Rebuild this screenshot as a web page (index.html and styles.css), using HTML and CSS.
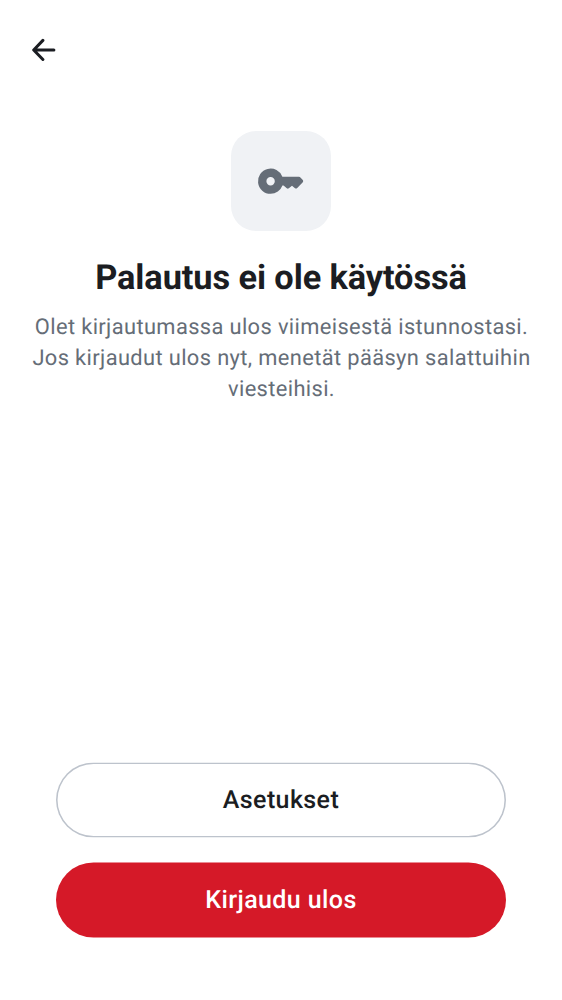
FILE: index.html
```html
<!DOCTYPE html>
<html lang="fi">
<head>
<meta charset="utf-8">
<title>Palautus ei ole käytössä</title>
<link rel="stylesheet" href="styles.css">
</head>
<body>
<div class="screen">
  <header class="topbar">
    <button class="back" aria-label="Takaisin">
      <svg width="24" height="24" viewBox="0 0 24 24" fill="none" stroke="#1b1d22" stroke-width="3" stroke-linecap="round" stroke-linejoin="round"><path d="M21.9 12H2M10.9 2.4L1.7 12l9.2 9.5"/></svg>
    </button>
  </header>
  <main class="content">
    <div class="tile">
      <svg width="50" height="50" viewBox="0 0 50 50" fill="#656d77"><path fill-rule="evenodd" d="M14.6 29.4a4.2 4.2 0 1 1 0-8.4 4.2 4.2 0 0 1 0 8.4M14.6 37.8a12.6 12.6 0 1 1 11.8-17H43q.8 0 1.4.6l2.4 2.6q.9 1.1 0 2.2L41 32.2q-1 .8-2 0L36 29.7l-3.2 2.6q-1 .8-2 0L27.5 29.4h-1.1A12.6 12.6 0 0 1 14.6 37.8"/></svg>
    </div>
    <h1 class="title">Palautus ei ole käytössä</h1>
    <p class="subtitle">Olet kirjautumassa ulos viimeisestä istunnostasi. Jos kirjaudut ulos nyt, menetät pääsyn salattuihin viesteihisi.</p>
  </main>
  <footer class="actions">
    <button class="button outlined">Asetukset</button>
    <button class="button danger">Kirjaudu ulos</button>
  </footer>
</div>
</body>
</html>
```
FILE: styles.css
```css
* { box-sizing: border-box; }
body { margin: 0; background: #fff; font-family: Roboto, sans-serif; text-rendering: geometricPrecision; }
button { border: 0; padding: 0; background: none; font: inherit; text-rendering: inherit; }
.screen { height: 1000px; display: flex; flex-direction: column; }
.topbar { height: 100px; display: flex; align-items: center; padding-left: 32px; }
.back { display: flex; }
.content { flex: 1; display: flex; flex-direction: column; align-items: center; padding: 31px 25px 0; }
.tile { width: 100px; height: 100px; border-radius: 25px; background: #f0f2f5; display: flex; align-items: center; justify-content: center; }
.title { margin: 26px 0 0; font-size: 34.375px; line-height: 42px; font-weight: 670; letter-spacing: -.1px; color: #1b1d22; white-space: nowrap; }
.subtitle { margin: 13px 0 0; padding-left: 1px; font-size: 21.875px; line-height: 31px; letter-spacing: .37px; color: #656d77; text-align: center; }
.actions { display: flex; flex-direction: column; gap: 25px; padding: 0 56px 62px; }
.button { height: 75px; border-radius: 37.5px; font-size: 25px; line-height: 37px; font-weight: 480; letter-spacing: .4px; color: #1b1d22; transform: translateY(-.5px); }
.outlined { box-shadow: inset 0 0 0 1.56px #bdc3cc; }
.danger { background: #d51928; color: #fff; }
```
